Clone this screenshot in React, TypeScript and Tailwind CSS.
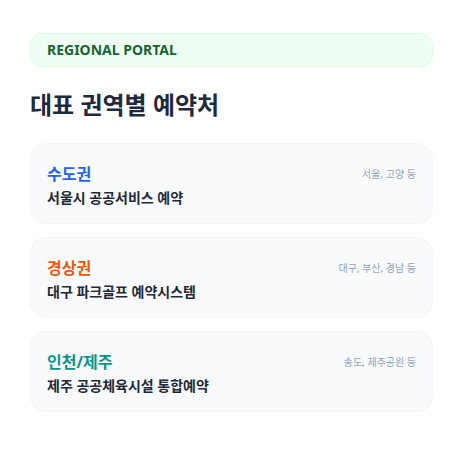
import React from "react";

const regions = [
  { name: "수도권", color: "text-[#2563eb]", desc: "서울시 공공서비스 예약", area: "서울, 고양 등" },
  { name: "경상권", color: "text-[#ea580c]", desc: "대구 파크골프 예약시스템", area: "대구, 부산, 경남 등" },
  { name: "인천/제주", color: "text-[#0d9488]", desc: "제주 공공체육시설 통합예약", area: "송도, 제주공원 등" },
];

export default function App() {
  return (
    <div
      className="min-h-[463px] bg-white pl-[30px] pr-[34px] pt-[33px]"
      style={{ fontFamily: '"Noto Sans", "Noto Sans CJK KR", sans-serif' }}
    >
      <div className="rounded-xl border border-[#dcfce7] bg-[#f0fdf4] px-4 py-[6px] text-sm leading-5">
        <span className="font-bold text-[#166534]">REGIONAL PORTAL</span>
      </div>
      <h1 className="mt-[22px] text-2xl font-bold text-[#1e293b]">대표 권역별 예약처</h1>
      <div className="mt-[22px] flex flex-col gap-[13px]">
        {regions.map((r) => (
          <div
            key={r.name}
            className="flex items-start justify-between rounded-2xl border border-[#f1f5f9] bg-[#f8fafc] px-4 pb-[15px] pt-[18px]"
          >
            <div className="flex flex-col">
              <span className={`text-base font-bold leading-6 ${r.color}`}>{r.name}</span>
              <span className="mt-[2px] text-sm font-bold leading-5 text-[#1f2937]">{r.desc}</span>
            </div>
            <span className="text-[10px] leading-6 text-[#94a3b8]">{r.area}</span>
          </div>
        ))}
      </div>
    </div>
  );
}
